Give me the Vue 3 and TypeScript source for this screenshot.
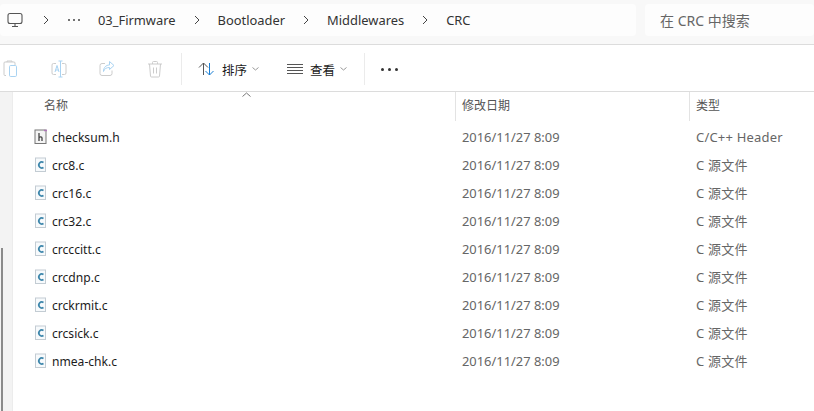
<template>
  <div class="explorer">
    <div class="topbar">
      <div class="address">
        <svg class="pc" width="16" height="16" viewBox="0 0 16 16" fill="none" stroke="#555" stroke-width="1.1">
          <rect x="1" y="1.500" width="14" height="10" rx="2" />
          <path d="M8 11.500v3M5 14.500h6" />
        </svg>
        <svg class="chev" width="6" height="10" viewBox="0 0 6 10" fill="none" stroke="#444"><path d="M1 1l4 4-4 4" /></svg>
        <div class="dots"><i></i><i></i><i></i></div>
        <template v-for="(crumb, i) in crumbs" :key="crumb">
          <svg v-if="i > 0" class="chev" width="6" height="10" viewBox="0 0 6 10" fill="none" stroke="#444"><path d="M1 1l4 4-4 4" /></svg>
          <span class="crumb">{{ crumb }}</span>
        </template>
      </div>
      <div class="search">在 CRC 中搜索</div>
    </div>

    <div class="toolbar">
      <div class="tool-group">
        <svg width="16" height="18" viewBox="0 0 16 18" fill="none" stroke-width="1">
          <path d="M3 15.500H2a1 1 0 0 1-1-1V3a1 1 0 0 1 1-1h9a1 1 0 0 1 1 1v2M4 2V1h5v1" stroke="#ccc" />
          <rect x="6.500" y="5.500" width="7" height="11" rx="1.200" stroke="#a9d3f2" />
        </svg>
        <svg width="16" height="18" viewBox="0 0 16 18" fill="none" stroke-width="1">
          <path d="M5 3.500H2.500a1.500 1.500 0 0 0-1.500 1.500v8a1.500 1.500 0 0 0 1.500 1.500H5M11 3.500h2.500A1.500 1.500 0 0 1 15 5v8a1.500 1.500 0 0 1-1.500 1.500H11" stroke="#ccc" />
          <path d="M9.500 1v16M7.500 1h4M7.500 17h4M4 12l2-6.500L8 12M4.700 10h2.600" stroke="#a9d3f2" />
        </svg>
        <svg width="16" height="18" viewBox="0 0 16 18" fill="none" stroke-width="1">
          <path d="M6 3.500H3a2 2 0 0 0-2 2v8a2 2 0 0 0 2 2h8a2 2 0 0 0 2-2v-3" stroke="#ccc" />
          <path d="M10.500 1.500l4.500 4-4.500 4V7.500c-3 0-5 1-6 4 0-4 2.500-6.500 6-6.500z" stroke="#a9d3f2" />
        </svg>
        <svg width="16" height="18" viewBox="0 0 16 18" fill="none" stroke="#ccc" stroke-width="1">
          <path d="M1 4h14M5.500 4V2.500a1 1 0 0 1 1-1h3a1 1 0 0 1 1 1V4M2.500 4l1 12a1 1 0 0 0 1 1h7a1 1 0 0 0 1-1l1-12M6.500 7.500v6M9.500 7.500v6" />
        </svg>
      </div>
      <div class="sep"></div>
      <div class="tool-menu sort">
        <svg width="17" height="14" viewBox="0 0 17 14" fill="none" stroke-width="1">
          <path d="M5.500 13V1M1 5.500l4.500-4.500 4.500 4.500" stroke="#555" />
          <path d="M11.500 1v12M7.500 9l4 4 4-4" stroke="#1a7fd4" />
        </svg>
        <span>排序</span>
        <svg class="caret" width="7" height="4" viewBox="0 0 7 4" fill="none" stroke="#999"><path d="M.5.500l3 2.500 3-2.500" /></svg>
      </div>
      <div class="tool-menu view">
        <svg width="16" height="10" viewBox="0 0 16 10" fill="none" stroke="#555" stroke-width="1"><path d="M0 .500h16M0 3.500h16M0 6.500h16M0 9.500h16" /></svg>
        <span>查看</span>
        <svg class="caret" width="7" height="4" viewBox="0 0 7 4" fill="none" stroke="#999"><path d="M.5.500l3 2.500 3-2.500" /></svg>
      </div>
      <div class="sep"></div>
      <div class="more"><i></i><i></i><i></i></div>
    </div>

    <div class="content">
      <div class="gutter"><div class="thumb"></div></div>
      <div class="list">
        <svg class="sort-arrow" width="9" height="5" viewBox="0 0 9 5" fill="none" stroke="#777"><path d="M.5 4.500l4-3.500 4 3.500" /></svg>
        <div class="head">
          <div class="col name">名称</div>
          <div class="col date">修改日期</div>
          <div class="col type">类型</div>
        </div>
        <div class="row" v-for="f in files" :key="f.name">
          <div class="col name">
            <svg v-if="f.header" class="icon" width="14" height="16" viewBox="0 0 14 16" fill="none">
              <rect x="1" y="1" width="11" height="13.500" fill="#f4f4f4" stroke="#777" />
              <path d="M5 4v8M5 8.500c1-1 3-1 3 .500V12" stroke="#444" stroke-width="1.300" />
              <path d="M10 1.500h3" stroke="#b56fc0" stroke-width="1.500" stroke-dasharray="1.500 .500" />
            </svg>
            <svg v-else class="icon" width="14" height="16" viewBox="0 0 14 16" fill="none">
              <rect x="1.500" y="1" width="10" height="13.500" fill="#f7fafc" stroke="#c3ccd3" />
              <path d="M9.500 5.500a3 3 0 1 0 0 5" stroke="#3d86ab" stroke-width="1.700" />
            </svg>
            <span class="fname">{{ f.name }}</span>
          </div>
          <div class="col date">2016/11/27 8:09</div>
          <div class="col type">{{ f.header ? 'C/C++ Header' : 'C 源文件' }}</div>
        </div>
      </div>
    </div>
  </div>
</template>

<script setup lang="ts">
const crumbs = ['03_Firmware', 'Bootloader', 'Middlewares', 'CRC']

const files = [
  { name: 'checksum.h', header: true },
  { name: 'crc8.c' },
  { name: 'crc16.c' },
  { name: 'crc32.c' },
  { name: 'crcccitt.c' },
  { name: 'crcdnp.c' },
  { name: 'crckrmit.c' },
  { name: 'crcsick.c' },
  { name: 'nmea-chk.c' },
]
</script>

<style>
html,
body {
  margin: 0;
  background: #fff;
  overflow: hidden;
}
</style>

<style scoped>
.explorer {
  width: 814px;
  height: 411px;
  display: flex;
  flex-direction: column;
  font-family: "Noto Sans", "Noto Sans CJK SC", sans-serif;
  font-size: 12px;
  color: #1c1c1c;
  overflow: hidden;
}

.topbar {
  height: 45px;
  box-sizing: border-box;
  flex: none;
  display: flex;
  gap: 9px;
  padding-top: 4px;
  background: #f8f8f8;
  border-bottom: 1px solid #dcdcdc;
}

.address,
.search {
  height: 32px;
  background: #fdfdfd;
  border-radius: 4px;
  display: flex;
  align-items: center;
}

.address {
  width: 636px;
  flex: none;
  padding-left: 7px;
  box-sizing: border-box;
  color: #333;
  font-size: 12.9px;
}

.search {
  flex: 1;
  padding-left: 15px;
  color: #666;
  font-size: 14px;
}

.pc {
  flex: none;
}

.chev {
  flex: none;
  margin: 0 18px;
}

.pc + .chev {
  margin: 0 19px 0 20px;
}

.dots {
  display: flex;
  gap: 3px;
  margin-right: 18px;
}

.dots i {
  width: 2px;
  height: 2px;
  background: #444;
  border-radius: 50%;
}

.toolbar {
  height: 47px;
  box-sizing: border-box;
  flex: none;
  display: flex;
  align-items: center;
  padding-top: 2px;
  border-bottom: 1px solid #dcdcdc;
}

.tool-group {
  display: flex;
  align-items: center;
  gap: 32px;
  padding-left: 3px;
  width: 181px;
  box-sizing: border-box;
}

.sep {
  width: 1px;
  height: 32px;
  background: #ebebeb;
}

.tool-menu {
  display: flex;
  align-items: center;
}

.tool-menu span {
  font-size: 12.5px;
  margin-left: 7px;
  margin-right: 5px;
}

.sort {
  margin-left: 16px;
  width: 89px;
}

.view {
  width: 77px;
}

.more {
  display: flex;
  gap: 4px;
  margin-left: 16px;
}

.more i {
  width: 3px;
  height: 3px;
  border-radius: 50%;
  background: #333;
}

.content {
  flex: 1;
  display: flex;
  min-height: 0;
}

.gutter {
  width: 12px;
  flex: none;
  background: #f3f3f3;
  border-right: 1px solid #ececec;
  display: flex;
  flex-direction: column;
  justify-content: flex-end;
}

.thumb {
  width: 2px;
  height: 163px;
  margin-left: 1px;
  background: #8a8a8a;
}

.list {
  flex: 1;
  position: relative;
}

.sort-arrow {
  position: absolute;
  left: 229px;
  top: 0;
}

.head,
.row {
  display: flex;
}

.head {
  height: 29px;
  margin-bottom: 2px;
}

.col {
  line-height: 18px;
}

.col.name {
  width: 442px;
  padding-left: 21px;
  box-sizing: border-box;
  display: flex;
  align-items: center;
}

.col.date {
  width: 234px;
  padding-left: 7px;
  box-sizing: border-box;
  color: #666;
  font-size: 12.9px;
}

.col.type {
  flex: 1;
  padding-left: 7px;
  color: #666;
  font-size: 13px;
  letter-spacing: 0.2px;
}

.head .col.name,
.head .col.date,
.head .col.type {
  padding-top: 5px;
  box-sizing: border-box;
  font-size: 12px;
  color: #555;
  letter-spacing: 0;
}

.head .col.name {
  padding-left: 31px;
  align-items: flex-start;
}

.head .col.date,
.head .col.type {
  padding-left: 6px;
  border-left: 1px solid #e3e3e3;
}

.row {
  height: 28px;
  align-items: center;
}

.icon {
  flex: none;
  margin-right: 4px;
}

.fname {
  color: #1c1c1c;
  font-size: 12.1px;
  margin-top: 2px;
}
</style>
